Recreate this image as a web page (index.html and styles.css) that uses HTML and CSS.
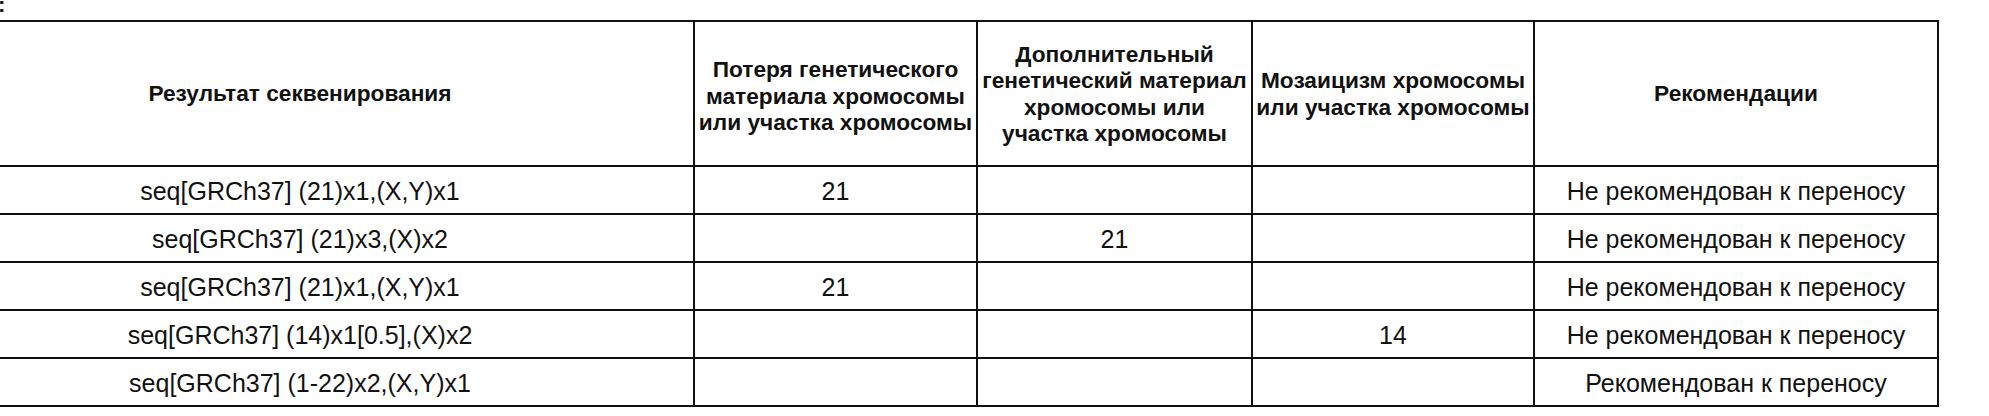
FILE: index.html
```html
<!DOCTYPE html>
<html lang="ru">
<head>
<meta charset="utf-8">
<title>Результаты секвенирования</title>
<link rel="stylesheet" href="styles.css">
</head>
<body>
<div class="caption"><span class="caption-mark">:</span></div>
<table class="results">
  <colgroup>
    <col class="c-result">
    <col class="c-loss">
    <col class="c-extra">
    <col class="c-mosaic">
    <col class="c-rec">
  </colgroup>
  <thead>
    <tr class="head-row">
      <th>Результат секвенирования</th>
      <th class="th-loss">Потеря генетического материала хромосомы или участка хромосомы</th>
      <th>Дополнительный генетический материал хромосомы или участка хромосомы</th>
      <th>Мозаицизм хромосомы или участка хромосомы</th>
      <th>Рекомендации</th>
    </tr>
  </thead>
  <tbody>
    <tr class="data-row">
      <td>seq[GRCh37] (21)x1,(X,Y)x1</td>
      <td>21</td>
      <td></td>
      <td></td>
      <td>Не рекомендован к переносу</td>
    </tr>
    <tr class="data-row">
      <td>seq[GRCh37] (21)x3,(X)x2</td>
      <td></td>
      <td>21</td>
      <td></td>
      <td>Не рекомендован к переносу</td>
    </tr>
    <tr class="data-row">
      <td>seq[GRCh37] (21)x1,(X,Y)x1</td>
      <td>21</td>
      <td></td>
      <td></td>
      <td>Не рекомендован к переносу</td>
    </tr>
    <tr class="data-row">
      <td>seq[GRCh37] (14)x1[0.5],(X)x2</td>
      <td></td>
      <td></td>
      <td>14</td>
      <td>Не рекомендован к переносу</td>
    </tr>
    <tr class="data-row">
      <td>seq[GRCh37] (1-22)x2,(X,Y)x1</td>
      <td></td>
      <td></td>
      <td></td>
      <td>Рекомендован к переносу</td>
    </tr>
  </tbody>
</table>
</body>
</html>
```

FILE: styles.css
```css
html, body {
  margin: 0;
  padding: 0;
  background: #ffffff;
}

body {
  font-family: "Liberation Sans", Arial, sans-serif;
  color: #111111;
  overflow: hidden;
}

.caption {
  height: 20px;
  font-size: 22px;
  font-weight: bold;
  line-height: 9px;
  margin-left: -2px;
}

.results {
  border-collapse: collapse;
  table-layout: fixed;
  width: 2034px;
  margin-left: -95px;
}

.c-result { width: 788px; }
.c-loss { width: 283px; }
.c-extra { width: 275px; }
.c-mosaic { width: 282px; }
.c-rec { width: 404px; }

.results th,
.results td {
  border: 2px solid #111111;
  text-align: center;
  vertical-align: middle;
  padding: 0 2px;
}

.results th {
  font-size: 22.7px;
  font-weight: bold;
  line-height: 26.5px;
}

.results th.th-loss {
  padding-top: 5px;
}

.results td {
  font-size: 25px;
  line-height: 29px;
  font-weight: normal;
  padding-top: 3px;
}

.head-row { height: 145px; }
.data-row { height: 48px; }
```
